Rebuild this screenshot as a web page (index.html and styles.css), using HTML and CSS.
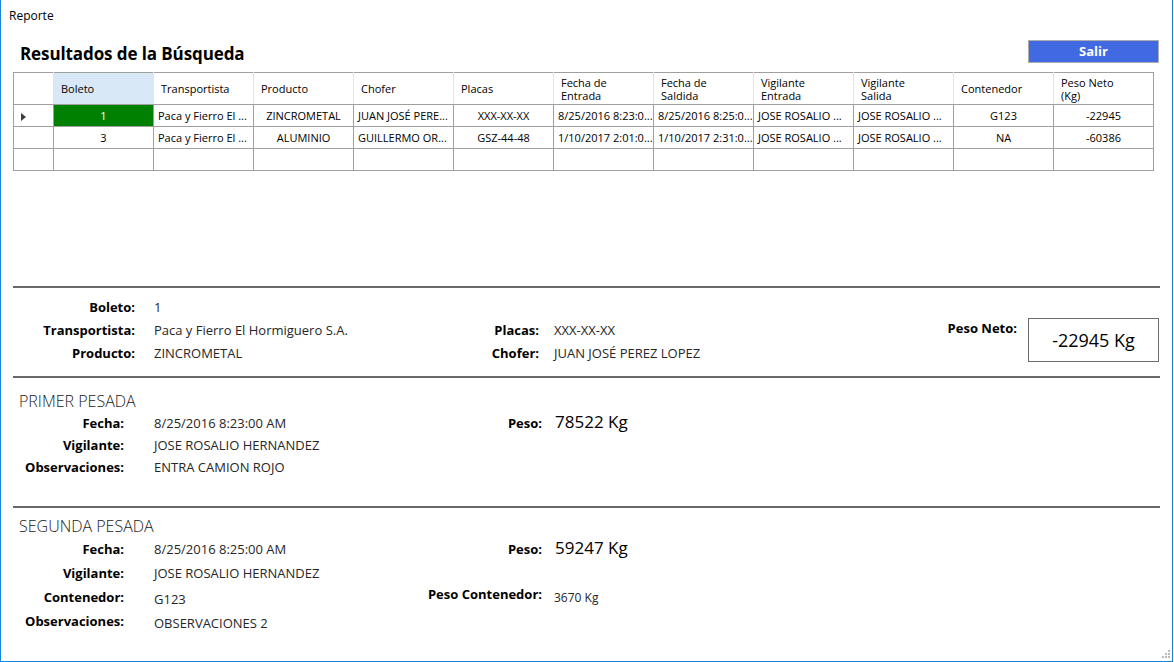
FILE: index.html
```html
<!DOCTYPE html>
<html lang="es">
<head>
<meta charset="utf-8">
<title>Reporte</title>
<link rel="stylesheet" href="styles.css">
</head>
<body>
<div class="window">
  <div class="titlebar">Reporte</div>
  <div class="content">
    <div class="head-row">
      <h1 class="title">Resultados de la Búsqueda</h1>
      <button class="btn-salir">Salir</button>
    </div>

    <table class="grid">
      <colgroup>
        <col class="c-rh">
        <col class="c"><col class="c"><col class="c"><col class="c"><col class="c"><col class="c">
        <col class="c"><col class="c"><col class="c"><col class="c"><col class="c">
      </colgroup>
      <thead>
        <tr>
          <th class="rh"></th>
          <th class="sel">Boleto</th>
          <th>Transportista</th>
          <th>Producto</th>
          <th>Chofer</th>
          <th>Placas</th>
          <th>Fecha de<br>Entrada</th>
          <th>Fecha de<br>Saldida</th>
          <th>Vigilante<br>Entrada</th>
          <th>Vigilante<br>Salida</th>
          <th>Contenedor</th>
          <th class="last">Peso Neto<br>(Kg)</th>
        </tr>
      </thead>
      <tbody>
        <tr>
          <td class="rh"><span class="arrow"></span></td>
          <td class="ctr cur">1</td>
          <td>Paca y Fierro El ...</td>
          <td class="ctr">ZINCROMETAL</td>
          <td>JUAN JOSÉ PERE...</td>
          <td class="ctr">XXX-XX-XX</td>
          <td>8/25/2016 8:23:0...</td>
          <td>8/25/2016 8:25:0...</td>
          <td>JOSE ROSALIO ...</td>
          <td>JOSE ROSALIO ...</td>
          <td class="ctr">G123</td>
          <td class="ctr">-22945</td>
        </tr>
        <tr>
          <td class="rh"></td>
          <td class="ctr">3</td>
          <td>Paca y Fierro El ...</td>
          <td class="ctr">ALUMINIO</td>
          <td>GUILLERMO OR...</td>
          <td class="ctr">GSZ-44-48</td>
          <td>1/10/2017 2:01:0...</td>
          <td>1/10/2017 2:31:0...</td>
          <td>JOSE ROSALIO ...</td>
          <td>JOSE ROSALIO ...</td>
          <td class="ctr">NA</td>
          <td class="ctr">-60386</td>
        </tr>
        <tr>
          <td class="rh"></td>
          <td></td><td></td><td></td><td></td><td></td><td></td>
          <td></td><td></td><td></td><td></td><td></td>
        </tr>
      </tbody>
    </table>

    <div class="spacer"></div>

    <section class="info">
      <div class="lbl r1">Boleto:</div>
      <div class="val v1 r1">1</div>

      <div class="lbl r2">Transportista:</div>
      <div class="val v1 r2">Paca y Fierro El Hormiguero S.A.</div>
      <div class="lbl l2 r2">Placas:</div>
      <div class="val v2 r2">XXX-XX-XX</div>
      <div class="lbl l3 r2">Peso Neto:</div>
      <div class="neto-box">-22945 Kg</div>

      <div class="lbl r3">Producto:</div>
      <div class="val v1 r3">ZINCROMETAL</div>
      <div class="lbl l2 r3">Chofer:</div>
      <div class="val v2 r3">JUAN JOSÉ PEREZ LOPEZ</div>
    </section>

    <section class="pesada primera">
      <h2 class="pesada-title">PRIMER PESADA</h2>
      <div class="pgrid">
        <div class="lbl">Fecha:</div>
        <div class="val">8/25/2016 8:23:00 AM</div>
        <div class="lbl">Peso:</div>
        <div class="val big">78522 Kg</div>

        <div class="lbl">Vigilante:</div>
        <div class="val">JOSE ROSALIO HERNANDEZ</div>
        <div></div><div></div>

        <div class="lbl">Observaciones:</div>
        <div class="val">ENTRA CAMION ROJO</div>
        <div></div><div></div>
      </div>
    </section>

    <section class="pesada segunda">
      <h2 class="pesada-title">SEGUNDA PESADA</h2>
      <div class="pgrid">
        <div class="lbl">Fecha:</div>
        <div class="val">8/25/2016 8:25:00 AM</div>
        <div class="lbl">Peso:</div>
        <div class="val big">59247 Kg</div>

        <div class="lbl">Vigilante:</div>
        <div class="val">JOSE ROSALIO HERNANDEZ</div>
        <div></div><div></div>

        <div class="lbl">Contenedor:</div>
        <div class="val low">G123</div>
        <div class="lbl up">Peso Contenedor:</div>
        <div class="val small">3670 Kg</div>

        <div class="lbl">Observaciones:</div>
        <div class="val low">OBSERVACIONES 2</div>
        <div></div><div></div>
      </div>
    </section>
  </div>
  <svg class="grip" width="8" height="8" viewBox="0 0 8 8">
    <rect x="6" y="0" width="2" height="2" fill="#bcbcbc"/>
    <rect x="3" y="3" width="2" height="2" fill="#bcbcbc"/>
    <rect x="6" y="3" width="2" height="2" fill="#bcbcbc"/>
    <rect x="0" y="6" width="2" height="2" fill="#bcbcbc"/>
    <rect x="3" y="6" width="2" height="2" fill="#bcbcbc"/>
    <rect x="6" y="6" width="2" height="2" fill="#bcbcbc"/>
  </svg>
</div>
</body>
</html>
```
FILE: styles.css
```css
* { box-sizing: border-box; }

html, body {
  margin: 0;
  padding: 0;
  background: #ffffff;
}

body {
  font-family: "Open Sans", "Noto Sans", "Liberation Sans", sans-serif;
  color: #000;
}

.window {
  position: relative;
  width: 1173px;
  height: 662px;
  border-left: 1px solid #1883d7;
  border-right: 1px solid #1883d7;
  border-bottom: 1px solid #1883d7;
  background: #fff;
  overflow: hidden;
}

.titlebar {
  height: 32px;
  padding-left: 8px;
  font-size: 12px;
  line-height: 32px;
  color: #000;
}

.content {
  margin-left: 12px;
  width: 1147px;
}

.head-row {
  height: 40px;
  display: flex;
  align-items: center;
  justify-content: space-between;
}

.title {
  margin: 2px 0 0 7px;
  font-size: 17px;
  font-weight: 700;
  letter-spacing: -0.1px;
}

.btn-salir {
  width: 131px;
  height: 23px;
  margin: 0 1px 0 0;
  padding: 0;
  background: #4169e1;
  border: 1px solid #adadad;
  color: #fff;
  font-family: inherit;
  font-size: 13px;
  font-weight: 700;
  margin-top: -2px;
}

/* grid */
.grid {
  border-collapse: collapse;
  table-layout: fixed;
  width: 1141px;
  border: 1px solid #a0a0a0;
  font-size: 11px;
}

.c-rh { width: 40px; }
.c { width: 100px; }

.grid th {
  height: 32px;
  padding: 0 7px;
  font-weight: 400;
  text-align: left;
  line-height: 13px;
  border-right: 1px solid #e4e4e4;
  border-bottom: 1px solid #a0a0a0;
  background: #fff;
  white-space: nowrap;
}

.grid th.last { border-right: 1px solid #a0a0a0; }

.grid th.sel { background: #d9e8f6; }

.grid td {
  height: 22px;
  padding: 0 4px;
  border: 1px solid #a0a0a0;
  white-space: nowrap;
  overflow: hidden;
  line-height: 14px;
}

.grid td.rh { padding: 0 0 0 7px; }

.grid td.ctr { text-align: center; }

.grid td.cur {
  background: #008000;
  color: #fff;
}

.arrow {
  display: inline-block;
  width: 0;
  height: 0;
  border-top: 4px solid transparent;
  border-bottom: 4px solid transparent;
  border-left: 5px solid #3c3c3c;
  vertical-align: middle;
}

.spacer { height: 115px; }

/* info section */
.lbl {
  font-weight: 700;
  font-size: 13px;
  text-align: right;
  white-space: nowrap;
}

.val {
  font-size: 13px;
  font-weight: 400;
  color: #262626;
  white-space: nowrap;
}

.info {
  border-top: 2px solid #696969;
  padding: 7px 1px 12px 0;
  display: grid;
  grid-template-columns: 122px 304px 100px 1fr auto 131px;
  grid-template-rows: 23px 23px 23px;
  align-items: center;
}

.info .r1 { grid-row: 1; }
.info .r2 { grid-row: 2; }
.info .r3 { grid-row: 3; }
.info .lbl { grid-column: 1; }
.info .v1 { grid-column: 2; padding-left: 19px; }
.info .l2 { grid-column: 3; }
.info .v2 { grid-column: 4; padding-left: 15px; }
.info .l3 { grid-column: 5; padding-right: 11px; align-self: start; padding-top: 1px; }

.neto-box {
  grid-column: 6;
  grid-row: 2 / span 2;
  align-self: start;
  height: 44px;
  border: 1px solid #6d6d6d;
  display: flex;
  align-items: center;
  justify-content: center;
  font-size: 18px;
  font-weight: 400;
  color: #000;
}

/* pesadas */
.pesada {
  border-top: 2px solid #696969;
}

.pesada-title {
  margin: 0;
  padding-left: 6px;
  height: 22px;
  line-height: 22px;
  font-size: 16px;
  font-weight: 300;
  color: #1a1a1a;
}

.pgrid {
  display: grid;
  grid-template-columns: 111px 288px 130px 1fr;
  align-items: center;
}

.pgrid .val:nth-child(4n+2) { padding-left: 30px; }
.pgrid .val:nth-child(4n) { padding-left: 13px; }

.primera { padding: 12px 0 28px 0; }
.primera .pgrid { grid-template-rows: repeat(3, 22px); }

.segunda { padding: 7px 0 0 0; }
.segunda .pgrid { grid-template-rows: repeat(4, 24px); }

.val.big {
  font-size: 17px;
  font-weight: 400;
  color: #000;
  margin-top: -3px;
}

.val.small {
  font-size: 12px;
}

.pgrid .val.small { padding-left: 12px; }

.val.low { padding-top: 3px; }
.lbl.up { margin-top: -6px; }

.grip {
  position: absolute;
  right: 2px;
  bottom: 3px;
}
```
